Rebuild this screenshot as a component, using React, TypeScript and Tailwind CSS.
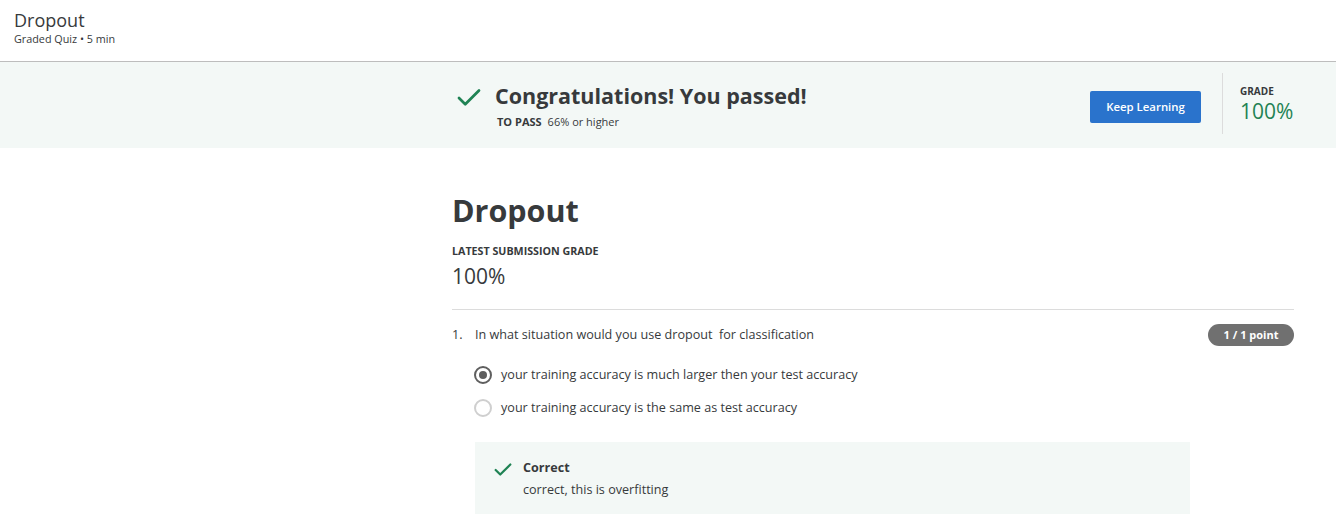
import { Check } from 'lucide-react'

const font = { fontFamily: '"Open Sans", "Liberation Sans", sans-serif' }

function Radio({ checked }: { checked: boolean }) {
  return (
    <span
      className={`w-[18px] h-[18px] rounded-full border-2 flex items-center justify-center shrink-0 ${
        checked ? 'border-[#5f5f5f]' : 'border-[#cfcfcf]'
      }`}
    >
      {checked && <span className="w-[8px] h-[8px] rounded-full bg-[#5f5f5f]" />}
    </span>
  )
}

export default function App() {
  return (
    <div className="w-[1336px] h-[528px] overflow-hidden bg-white text-[#373a3c]" style={font}>
      <header className="h-[62px] border-b border-[#bdbdbd] px-[14px] pt-[8px]">
        <h1 className="text-[18px] leading-[24px]">Dropout</h1>
        <p className="text-[10.8px] leading-[14px]">Graded Quiz • 5 min</p>
      </header>

      <section className="h-[86px] bg-[#f3f8f6] pl-[452px]">
        <div className="w-[842px] h-full flex items-center">
          <Check className="w-[30px] h-[30px] text-[#1f8354] ml-[2px] mt-[-14px]" strokeWidth={2.2} />
          <div className="ml-[11px] flex-1">
            <h2 className="text-[21.5px] leading-[28px] font-bold">Congratulations! You passed!</h2>
            <p className="text-[11px] leading-[14px] mt-[5px] ml-[2px]">
              <span className="font-bold mr-[6px]">TO PASS</span>
              66% or higher
            </p>
          </div>
          <button className="w-[111px] h-[32px] rounded-[2px] bg-[#2a73cc] text-white text-[11.4px] font-semibold mt-[4px]">
            Keep Learning
          </button>
          <div className="w-px h-[61px] bg-[#dcdcdc] ml-[21px] mt-[-4px]" />
          <div className="ml-[17px] w-[54px] mt-[-2px]">
            <p className="text-[10px] leading-[14px] font-bold">GRADE</p>
            <p className="text-[21px] leading-[26px] text-[#1f8354]">100%</p>
          </div>
        </div>
      </section>

      <main className="pl-[452px] pt-[42px]">
        <div className="w-[842px]">
          <h2 className="text-[30.5px] leading-[40px] font-bold">Dropout</h2>
          <p className="text-[10.7px] leading-[14px] font-bold mt-[14px]">LATEST SUBMISSION GRADE</p>
          <p className="text-[21px] leading-[28px] mt-[4px]">100%</p>
          <div className="h-px bg-[#dcdcdc] mt-[19px]" />

          <div className="flex items-center mt-[14px] h-[22px]">
            <span className="text-[12.6px] w-[23px]">1.</span>
            <span className="text-[12.6px] flex-1">In what situation would you use dropout&nbsp; for classification</span>
            <span className="h-[22px] w-[86px] rounded-full bg-[#707070] text-white text-[11px] font-bold flex items-center justify-center">
              1 / 1 point
            </span>
          </div>

          <div className="ml-[22px] mt-[20px] flex flex-col gap-[15px]">
            <label className="flex items-center gap-[9px] h-[18px]">
              <Radio checked />
              <span className="text-[12.6px]">your training accuracy is much larger then your test accuracy</span>
            </label>
            <label className="flex items-center gap-[9px] h-[18px]">
              <Radio checked={false} />
              <span className="text-[12.6px]">your training accuracy is the same as test accuracy</span>
            </label>
          </div>

          <div className="ml-[23px] mt-[25px] w-[715px] h-[72px] bg-[#f3f8f6] flex pl-[17px] pt-[17px]">
            <Check className="w-[22px] h-[22px] text-[#1f8354]" strokeWidth={2.4} />
            <div className="ml-[9px]">
              <p className="text-[12.6px] leading-[18px] font-bold">Correct</p>
              <p className="text-[12.6px] leading-[18px] mt-[4px]">correct, this is overfitting</p>
            </div>
          </div>
        </div>
      </main>
    </div>
  )
}
